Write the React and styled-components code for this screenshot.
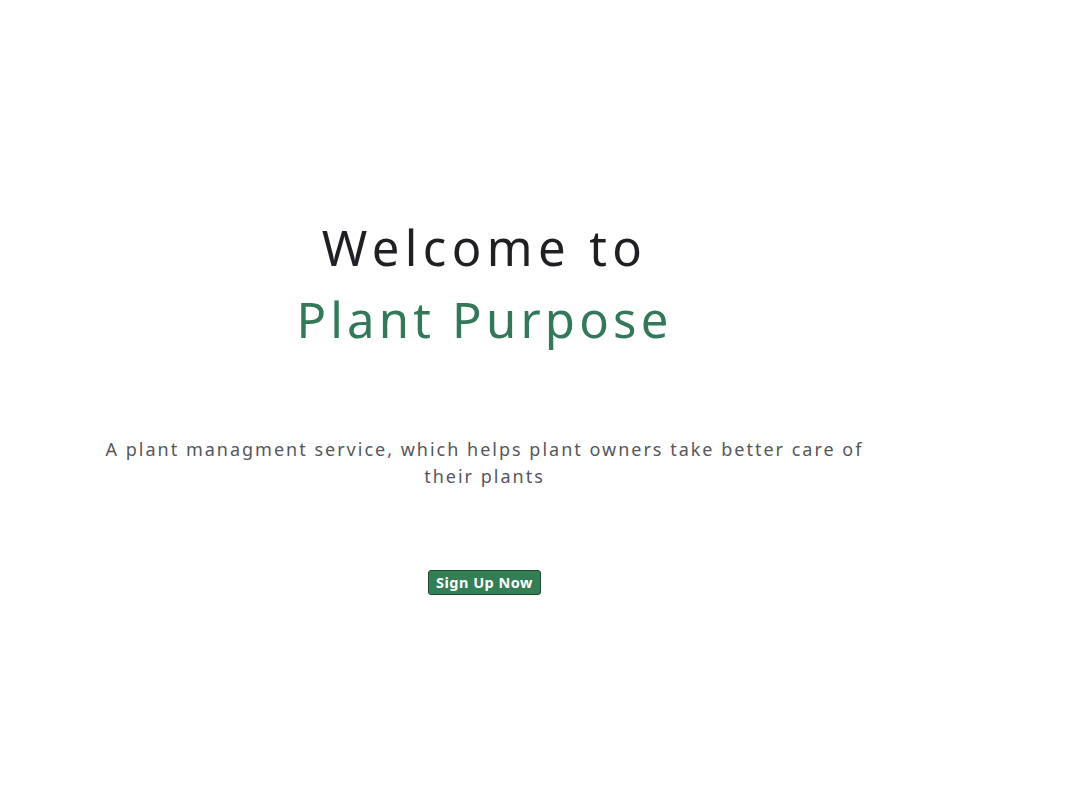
import React from 'react';
import styled, { createGlobalStyle } from 'styled-components';

const GlobalStyle = createGlobalStyle`
  html, body {
    margin: 0;
    padding: 0;
    background: #ffffff;
  }
  body {
    font-family: "Noto Sans", "Open Sans", sans-serif;
  }
`;

const Page = styled.div`
  width: 1072px;
  height: 785px;
  display: grid;
  grid-template-columns: 969px 1fr;
`;

const Hero = styled.section`
  display: flex;
  flex-direction: column;
  align-items: center;
  padding-top: 211px;
  text-align: center;
`;

const Title = styled.h1`
  margin: 0;
  font-weight: 400;
  font-size: 49px;
  line-height: 72px;
  letter-spacing: ${(p) => p.spacing || '5.4px'};
  color: ${(p) => p.color || '#1f1f24'};
`;

const Tagline = styled.p`
  margin: 81px 0 0;
  max-width: 775px;
  font-size: 18px;
  line-height: 27px;
  letter-spacing: 2px;
  color: #54565c;
`;

const SignUpButton = styled.button`
  margin-top: 80px;
  padding: 2px 7px;
  height: 25px;
  background: #347e56;
  border: 1px solid #1e4a31;
  border-radius: 3px;
  color: #ffffff;
  font-family: "Noto Sans", sans-serif;
  font-weight: 700;
  font-size: 14.5px;
  line-height: 19px;
  letter-spacing: 0.5px;
  cursor: pointer;
`;

export default function App() {
  return (
    <>
      <GlobalStyle />
      <Page>
        <Hero>
          <Title>Welcome to</Title>
          <Title color="#34785a" spacing="4.2px">Plant Purpose</Title>
          <Tagline>
            A plant managment service, which helps plant owners take better care of their plants
          </Tagline>
          <SignUpButton>Sign Up Now</SignUpButton>
        </Hero>
        <div />
      </Page>
    </>
  );
}
